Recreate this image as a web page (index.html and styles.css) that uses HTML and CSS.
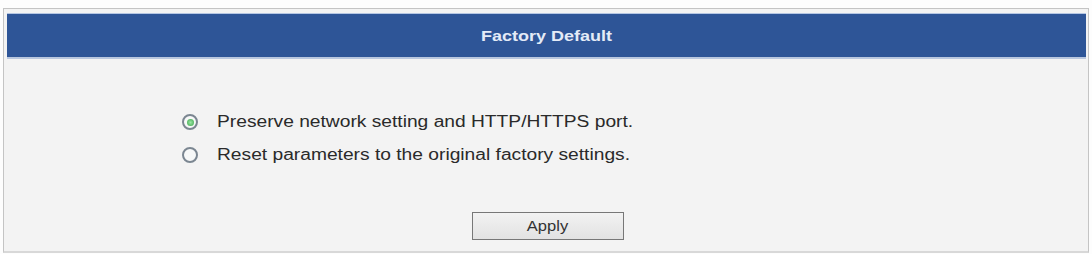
FILE: index.html
```html
<!DOCTYPE html>
<html>
<head>
<meta charset="utf-8">
<link rel="stylesheet" href="styles.css">
</head>
<body>
<div class="panel">
  <div class="header"><span class="title">Factory Default</span></div>
  <div class="content">
    <div class="options">
      <label class="option"><span class="radio checked"></span><span class="label">Preserve network setting and HTTP/HTTPS port.</span></label>
      <label class="option"><span class="radio"></span><span class="label">Reset parameters to the original factory settings.</span></label>
    </div>
    <div class="actions"><button class="apply"><span class="apply-text">Apply</span></button></div>
  </div>
</div>
</body>
</html>
```
FILE: styles.css
```css
html, body { margin: 0; padding: 0; background: #fdfdfd; }
body { padding: 8px 3px 0 3px; font-family: "Liberation Sans", Arial, sans-serif; }
.panel {
  border: 1px solid #c4c4c4;
  border-bottom: 2px solid #d8d8d8;
  padding: 4px 2px 0 3px;
  background: #f3f3f3;
  height: 245px;
  box-sizing: border-box;
  display: flex;
  flex-direction: column;
}
.header {
  background: #2e5597;
  border-top: 1px solid #b5c6e3;
  border-bottom: 2px solid #b9c7df;
  height: 46px;
  box-sizing: border-box;
  display: flex;
  align-items: center;
  justify-content: center;
  color: #e4ebf7;
  font-weight: bold;
  font-size: 15px;
}
.title { display: inline-block; transform: scaleX(1.2); }
.content { flex: 1; display: flex; flex-direction: column; }
.options { padding: 53px 0 0 175px; display: flex; flex-direction: column; gap: 13px; }
.option { display: flex; align-items: center; height: 20px; color: #2a2a2a; font-size: 16px; }
.label { display: inline-block; transform: scaleX(1.2); transform-origin: left center; }
.radio {
  width: 16px; height: 16px; border-radius: 50%;
  border: 2px solid #7b8691; background: #f7f8f8;
  margin-right: 19px; position: relative; flex: none;
  box-sizing: border-box;
}
.radio.checked::after {
  content: ""; position: absolute; left: 2.5px; top: 2.5px;
  width: 7px; height: 7px; border-radius: 50%;
  background: radial-gradient(circle, #9be6a4 0%, #42aa52 90%);
}
.actions { display: flex; justify-content: center; padding-top: 47px; padding-left: 3px; }
.apply {
  width: 152px; height: 28px;
  border: 1px solid #777;
  background: linear-gradient(#f2f2f2, #e2e2e2);
  font-family: "Liberation Sans", Arial, sans-serif;
  font-size: 14px; color: #333;
  padding: 0;
}
.apply-text { display: inline-block; transform: scaleX(1.18); }
```
